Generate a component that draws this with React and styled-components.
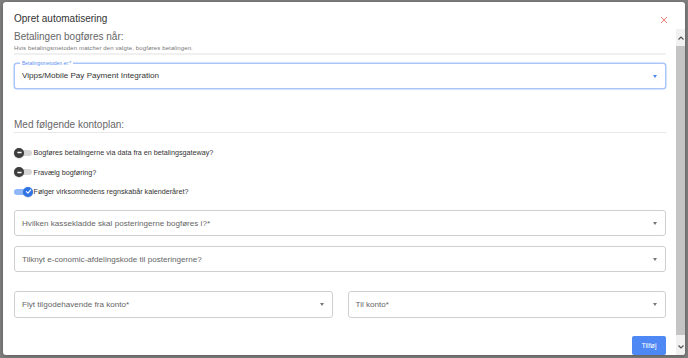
import React from "react";
import styled, { createGlobalStyle } from "styled-components";

const Global = createGlobalStyle`
  html, body { margin: 0; padding: 0; }
  body { font-family: "Liberation Sans", Arial, sans-serif; background: #7f7f7f; }
  * { box-sizing: border-box; }
`;

const Backdrop = styled.div`
  width: 688px;
  height: 358px;
  background: #7f7f7f;
  padding: 2px 3px 3px 3px;
  overflow: hidden;
`;

const Modal = styled.div`
  width: 682px;
  height: 353px;
  background: #fff;
  border-radius: 3px;
  display: flex;
  flex-direction: column;
  overflow: hidden;
  box-shadow: 0 1px 4px rgba(0, 0, 0, 0.3);
`;

const Header = styled.div`
  height: 27px;
  flex: none;
  display: flex;
  align-items: center;
  justify-content: space-between;
  padding: 6px 17px 0 11px;
`;

const Title = styled.div`
  font-size: 10px;
  line-height: 22px;
  color: #333;
`;

const Close = styled.button`
  border: 0;
  background: none;
  padding: 0;
  width: 8px;
  height: 8px;
  display: flex;
  margin-top: 3px;
`;

const BodyRow = styled.div`
  flex: 1;
  min-height: 0;
  display: flex;
`;

const Content = styled.div`
  flex: 1;
  min-width: 0;
  overflow: hidden;
  padding: 1px 10px 0 11px;
  display: flex;
  flex-direction: column;
`;

const SectionHeading = styled.div`
  font-size: 10px;
  line-height: 14px;
  color: #666;
  margin-top: ${(p) => p.$mt || 0}px;
`;

const Hint = styled.div`
  font-size: 6px;
  line-height: 9px;
  color: #777;
  letter-spacing: 0.12px;
`;

const Divider = styled.div`
  height: ${(p) => p.$h || 1}px;
  background: ${(p) => p.$c || "#ececec"};
  margin-top: ${(p) => p.$mt || 0}px;
`;

const FieldBox = styled.div`
  position: relative;
  height: 27px;
  border: 1px solid ${(p) => (p.$focused ? "#a9c5fa" : "#cfcfcf")};
  box-shadow: ${(p) => (p.$focused ? "0 0 0 0.5px #a9c5fa" : "none")};
  border-radius: 3px;
  display: flex;
  align-items: center;
  padding: 0 20px 0 7px;
  margin-top: ${(p) => p.$mt || 0}px;
  background: #fff;
`;

const FieldLabel = styled.span`
  position: absolute;
  top: -4px;
  left: 5px;
  padding: 0 2px;
  background: #fff;
  font-size: 5px;
  line-height: 7px;
  color: #5b8ff0;
`;

const FieldText = styled.span`
  font-size: 8.1px;
  color: ${(p) => (p.$placeholder ? "#666" : "#333")};
  white-space: nowrap;
`;

const Caret = styled.span`
  position: absolute;
  right: 8px;
  top: 50%;
  margin-top: -1px;
  width: 0;
  height: 0;
  border-left: 2.5px solid transparent;
  border-right: 2.5px solid transparent;
  border-top: 3px solid ${(p) => (p.$focused ? "#4a86f0" : "#777")};
`;

const Toggles = styled.div`
  margin-top: 10.5px;
  display: flex;
  flex-direction: column;
`;

const ToggleRow = styled.label`
  height: 19.5px;
  display: flex;
  align-items: center;
  gap: 1.5px;
`;

const Switch = styled.span`
  position: relative;
  width: 18px;
  height: 10px;
  flex: none;
  display: flex;
  align-items: center;
`;

const Track = styled.span`
  width: 100%;
  height: 6px;
  border-radius: 3px;
  background: ${(p) => (p.$on ? "#8fb6f7" : "#d6d6d6")};
`;

const Knob = styled.span`
  position: absolute;
  top: 0;
  ${(p) => (p.$on ? "right: -1px;" : "left: 0;")}
  width: 10px;
  height: 10px;
  border-radius: 50%;
  background: ${(p) => (p.$on ? "#2f74e6" : "#3d3d3d")};
  display: flex;
  align-items: center;
  justify-content: center;
  box-shadow: 0 0.5px 1px rgba(0,0,0,0.3);
`;

const ToggleLabel = styled.span`
  font-size: 7.2px;
  color: #333;
  white-space: nowrap;
`;

const FieldRow = styled.div`
  display: grid;
  grid-template-columns: 1fr 1fr;
  gap: 15px;
  margin-top: ${(p) => p.$mt || 0}px;
`;

const Actions = styled.div`
  display: flex;
  justify-content: flex-end;
  margin-top: 18px;
  flex: none;
`;

const PrimaryButton = styled.button`
  width: 34px;
  height: 19px;
  border: 0;
  border-radius: 2px;
  background: #4d88f5;
  color: #fff;
  font-family: inherit;
  font-size: 7px;
  padding: 0;
`;

const Scrollbar = styled.div`
  width: 9px;
  flex: none;
  display: flex;
  flex-direction: column;
  background: #f1f1f1;
`;

const ScrollButton = styled.div`
  height: 17px;
  flex: none;
  display: flex;
  align-items: center;
  justify-content: center;
`;

const ScrollTrack = styled.div`
  flex: 1;
  display: flex;
  padding: 0 0 3px 0;
`;

const ScrollThumb = styled.div`
  flex: 1;
  background: #c4c4c4;
`;

function Field({ label, value, placeholder, focused, mt }) {
  return (
    <FieldBox $focused={focused} $mt={mt}>
      {label && <FieldLabel>{label}</FieldLabel>}
      <FieldText $placeholder={!value}>{value || placeholder}</FieldText>
      <Caret $focused={focused} />
    </FieldBox>
  );
}

function Toggle({ on, children }) {
  return (
    <ToggleRow>
      <Switch>
        <Track $on={on} />
        <Knob $on={on}>
          {on ? (
            <svg width="7" height="7" viewBox="0 0 10 10">
              <path d="M2 5.2 L4.2 7.3 L8.2 2.8" fill="none" stroke="#fff" strokeWidth="1.6" strokeLinecap="round" strokeLinejoin="round" />
            </svg>
          ) : (
            <svg width="7" height="7" viewBox="0 0 10 10">
              <path d="M2 5 H8" stroke="#fff" strokeWidth="1.8" />
            </svg>
          )}
        </Knob>
      </Switch>
      <ToggleLabel>{children}</ToggleLabel>
    </ToggleRow>
  );
}

export default function App() {
  return (
    <>
      <Global />
      <Backdrop>
        <Modal>
          <Header>
            <Title>Opret automatisering</Title>
            <Close aria-label="Luk">
              <svg width="8" height="8" viewBox="0 0 8 8">
                <path d="M1 1 L7 7 M7 1 L1 7" stroke="#f07a7a" strokeWidth="1" />
              </svg>
            </Close>
          </Header>
          <BodyRow>
            <Content>
              <SectionHeading>Betalingen bogføres når:</SectionHeading>
              <Hint>Hvis betalingsmetoden matcher den valgte, bogføres betalingen.</Hint>
              <Divider $h={2} $c="#f0f0f0" $mt={0} />
              <Field
                mt={8}
                focused
                label="Betalingsmetoden er:*"
                value="Vipps/Mobile Pay Payment Integration"
              />
              <SectionHeading $mt={29}>Med følgende kontoplan:</SectionHeading>
              <Divider $c="#e8e8e8" />
              <Toggles>
                <Toggle>Bogføres betalingerne via data fra en betalingsgateway?</Toggle>
                <Toggle>Fravælg bogføring?</Toggle>
                <Toggle on>Følger virksomhedens regnskabår kalenderåret?</Toggle>
              </Toggles>
              <Field mt={8.5} placeholder="Hvilken kassekladde skal posteringerne bogføres i?*" />
              <Field mt={10} placeholder="Tilknyt e-conomic-afdelingskode til posteringerne?" />
              <FieldRow $mt={19}>
                <Field placeholder="Flyt tilgodehavende fra konto*" />
                <Field placeholder="Til konto*" />
              </FieldRow>
              <Actions>
                <PrimaryButton>Tilføj</PrimaryButton>
              </Actions>
            </Content>
            <Scrollbar>
              <ScrollButton>
                <svg width="6" height="4" viewBox="0 0 6 4">
                  <path d="M0.5 3.5 L3 1 L5.5 3.5" fill="none" stroke="#555" strokeWidth="1.2" />
                </svg>
              </ScrollButton>
              <ScrollTrack>
                <ScrollThumb />
              </ScrollTrack>
              <ScrollButton>
                <svg width="6" height="4" viewBox="0 0 6 4">
                  <path d="M0.5 0.5 L3 3 L5.5 0.5" fill="none" stroke="#555" strokeWidth="1.2" />
                </svg>
              </ScrollButton>
            </Scrollbar>
          </BodyRow>
        </Modal>
      </Backdrop>
    </>
  );
}
